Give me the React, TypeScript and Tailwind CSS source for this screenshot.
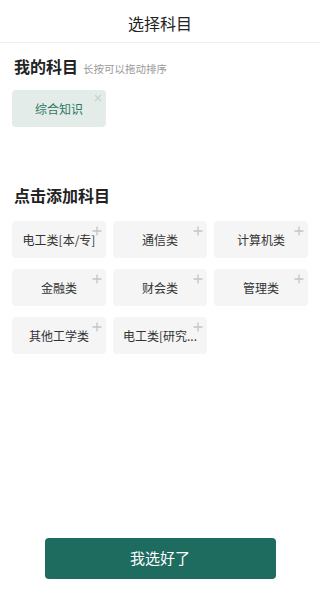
import { useState } from 'react';

const MINE = ['综合知识'];

const MORE = ['电工类[本/专]', '通信类', '计算机类', '金融类', '财会类', '管理类', '其他工学类', '电工类[研究...'];

function Plus() {
  return (
    <svg width="10" height="10" viewBox="0 0 10 10" className="absolute right-[4px] top-[5px]">
      <path d="M5 0.5V9.5M0.5 5H9.5" stroke="#c4c4c4" strokeWidth="1.3" />
    </svg>
  );
}

function Cross() {
  return (
    <svg width="8" height="8" viewBox="0 0 8 8" className="absolute right-[4px] top-[4px]">
      <path d="M1 1L7 7M7 1L1 7" stroke="#c9d3d1" strokeWidth="1.4" />
    </svg>
  );
}

export default function App() {
  const [mine] = useState(MINE);

  return (
    <div
      className="w-[320px] h-[616px] flex flex-col bg-white text-[#222]"
      style={{ fontFamily: '"Noto Sans CJK SC", "Noto Sans", sans-serif' }}
    >
      <div className="h-[43px] shrink-0 flex items-center justify-center pt-[4px] border-b border-[#efefef] text-[16px]">
        选择科目
      </div>

      <div className="px-3 pt-[11px]">
        <div className="flex items-baseline gap-[5px] px-[2px]">
          <span className="text-[16px] font-bold leading-[24px]">我的科目</span>
          <span className="text-[10.5px] text-[#999]">长按可以拖动排序</span>
        </div>

        <div className="mt-[12px] grid grid-cols-3 gap-x-[7px]">
          {mine.map((m) => (
            <div
              key={m}
              className="relative h-[37px] rounded-[4px] bg-[#e4ecea] flex items-center justify-center text-[12px] text-[#2d7866]"
            >
              {m}
              <Cross />
            </div>
          ))}
        </div>

        <div className="mt-[56px] px-[2px] text-[16px] font-bold leading-[24px]">点击添加科目</div>

        <div className="mt-[14px] grid grid-cols-3 gap-x-[7px] gap-y-[11px]">
          {MORE.map((m) => (
            <div
              key={m}
              className="relative h-[37px] rounded-[4px] bg-[#f5f5f5] flex items-center justify-center px-[2px] text-[12px] text-[#333]"
            >
              <span className="whitespace-nowrap">{m}</span>
              <Plus />
            </div>
          ))}
        </div>
      </div>

      <div className="mt-auto mb-[37px] flex justify-center">
        <button className="w-[231px] h-[41px] rounded-[4px] bg-[#1e6b5f] text-white text-[15px]">
          我选好了
        </button>
      </div>
    </div>
  );
}
